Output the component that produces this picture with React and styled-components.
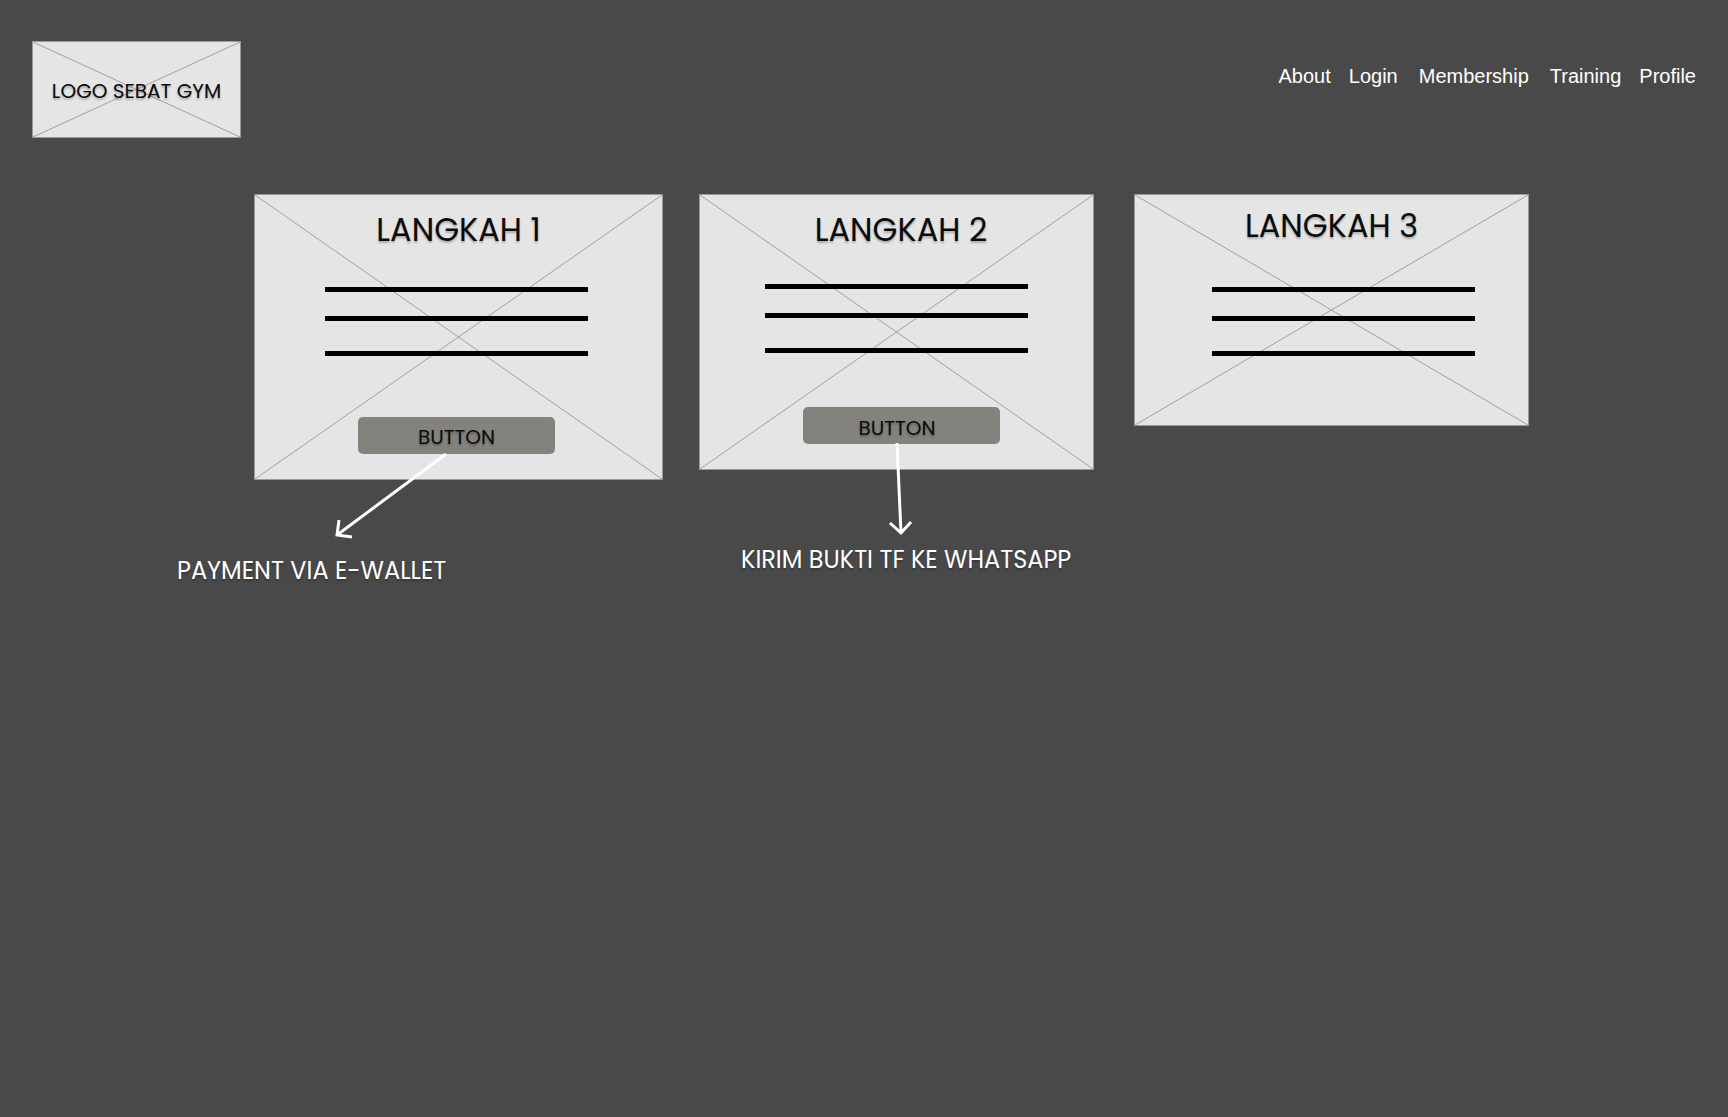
import React from "react";
import styled, { createGlobalStyle } from "styled-components";

const GlobalStyle = createGlobalStyle`
  *, *::before, *::after { box-sizing: border-box; }
  body {
    margin: 0;
    background: #494949;
    font-family: Poppins, Lato, sans-serif;
  }
`;

const textShadow = "0 2px 2px rgba(0, 0, 0, 0.25)";

const Page = styled.div`
  min-height: 100vh;
  padding-top: 41px;
`;

const Header = styled.header`
  display: flex;
  justify-content: space-between;
  align-items: flex-start;
  padding: 0 32px;
`;

const Frame = styled.div`
  position: relative;
  background: #e5e5e5;
  border: 1px solid #999999;
`;

const CrossSvg = styled.svg`
  position: absolute;
  inset: 0;
  width: 100%;
  height: 100%;
  stroke: #a0a0a0;
`;

const LogoFrame = styled(Frame)`
  display: grid;
  place-items: center;
  width: 209px;
  height: 97px;
  padding-top: 2px;
`;

const LogoText = styled.span`
  position: relative;
  color: #0b0b0b;
  font-size: 20px;
  line-height: 30px;
  white-space: nowrap;
  text-shadow: ${textShadow};
`;

const Nav = styled.nav`
  display: flex;
  flex-wrap: wrap;
  gap: 18px;
  padding-top: 24px;
`;

const NavLink = styled.a`
  padding: 0 ${(p) => (p.$wide ? 3 : 0)}px;
  color: #ffffff;
  font-family: Arial, "Liberation Sans", sans-serif;
  font-size: 20px;
  line-height: 23px;
  text-decoration: none;
`;

const Steps = styled.main`
  display: flex;
  align-items: flex-start;
  padding: 56px 199px 0 254px;
`;

const Step = styled.section`
  position: relative;
  flex: ${(p) => p.$grow} 1 0;
  min-width: 0;
  margin-left: ${(p) => p.$lead}px;
`;

const Card = styled(Frame)`
  display: flex;
  flex-direction: column;
  align-items: center;
  padding: ${(p) => p.$top}px 0 ${(p) => p.$bottom}px;
`;

const Title = styled.h2`
  position: relative;
  margin: 0;
  padding-left: ${(p) => p.$indent}px;
  color: #0b0b0b;
  font-size: 32px;
  font-weight: 400;
  line-height: 48px;
  white-space: nowrap;
  text-shadow: ${textShadow};
`;

const Bars = styled.div`
  position: relative;
  display: grid;
  grid-template-rows: 5px 5px 11px;
  align-items: end;
  row-gap: 24px;
  width: 263px;
  max-width: 100%;
  margin: ${(p) => p.$above}px ${(p) => p.$outdent}px 0 ${(p) => p.$indent}px;
`;

const Bar = styled.span`
  height: 5px;
  background: #000000;
`;

const Button = styled.button`
  position: relative;
  width: 197px;
  height: 37px;
  margin: ${(p) => p.$above}px ${(p) => p.$outdent}px 0 ${(p) => p.$indent}px;
  padding: ${(p) => p.$drop}px ${(p) => p.$inset}px 0 0;
  border: 0;
  border-radius: 5px;
  background: #84827d;
  color: #0b0b0b;
  font: inherit;
  font-size: 20px;
  line-height: 30px;
  text-shadow: ${textShadow};
  cursor: pointer;
`;

const Arrow = styled.svg`
  position: absolute;
  top: 0;
  left: 0;
  overflow: visible;
  fill: none;
  stroke: #ffffff;
  stroke-width: 3;
  pointer-events: none;
`;

const Note = styled.p`
  margin: ${(p) => p.$above}px 0 0 ${(p) => p.$start}px;
  color: #ffffff;
  font-size: 24px;
  line-height: 36px;
  white-space: nowrap;
  text-shadow: ${textShadow};
`;

const links = ["About", "Login", "Membership", "Training", "Profile"];

const steps = [
  {
    title: "LANGKAH 1",
    grow: 409,
    lead: 0,
    top: 11,
    bottom: 25,
    titleIndent: 0,
    bars: { above: 33, indent: 0, outdent: 4 },
    button: { above: 61, indent: 0, outdent: 4, drop: 2, inset: 0 },
    arrow: "M192 260 L83 341 M85 326 L83 341 L98 343",
    note: { text: "PAYMENT VIA E-WALLET", above: 73, start: -77 },
  },
  {
    title: "LANGKAH 2",
    grow: 395,
    lead: 36,
    top: 11,
    bottom: 25,
    titleIndent: 9,
    bars: { above: 30, indent: 0, outdent: 0 },
    button: { above: 54, indent: 10, outdent: 0, drop: 5, inset: 9 },
    arrow: "M198 249 L202 339 M191 329 L202 339 L212 328",
    note: { text: "KIRIM BUKTI TF KE WHATSAPP", above: 72, start: 42 },
  },
  {
    title: "LANGKAH 3",
    grow: 395,
    lead: 40,
    top: 7,
    bottom: 69,
    titleIndent: 0,
    bars: { above: 37, indent: 24, outdent: 0 },
  },
];

function Cross() {
  return (
    <CrossSvg viewBox="0 0 100 100" preserveAspectRatio="none" aria-hidden="true">
      <path d="M0 0 L100 100 M100 0 L0 100" vectorEffect="non-scaling-stroke" />
    </CrossSvg>
  );
}

export default function App() {
  return (
    <>
      <GlobalStyle />
      <Page>
        <Header>
          <LogoFrame>
            <Cross />
            <LogoText>LOGO SEBAT GYM</LogoText>
          </LogoFrame>
          <Nav>
            {links.map((name) => (
              <NavLink key={name} href={`#${name.toLowerCase()}`} $wide={name === "Membership"}>
                {name}
              </NavLink>
            ))}
          </Nav>
        </Header>
        <Steps>
          {steps.map(({ title, grow, lead, top, bottom, titleIndent, bars, button, arrow, note }) => (
            <Step key={title} $grow={grow} $lead={lead}>
              <Card $top={top} $bottom={bottom}>
                <Cross />
                <Title $indent={titleIndent}>{title}</Title>
                <Bars $above={bars.above} $indent={bars.indent} $outdent={bars.outdent}>
                  <Bar />
                  <Bar />
                  <Bar />
                </Bars>
                {button && (
                  <Button
                    type="button"
                    $above={button.above}
                    $indent={button.indent}
                    $outdent={button.outdent}
                    $drop={button.drop}
                    $inset={button.inset}
                  >
                    BUTTON
                  </Button>
                )}
              </Card>
              {arrow && (
                <Arrow width="395" height="350" aria-hidden="true">
                  <path d={arrow} />
                </Arrow>
              )}
              {note && <Note $above={note.above} $start={note.start}>{note.text}</Note>}
            </Step>
          ))}
        </Steps>
      </Page>
    </>
  );
}
